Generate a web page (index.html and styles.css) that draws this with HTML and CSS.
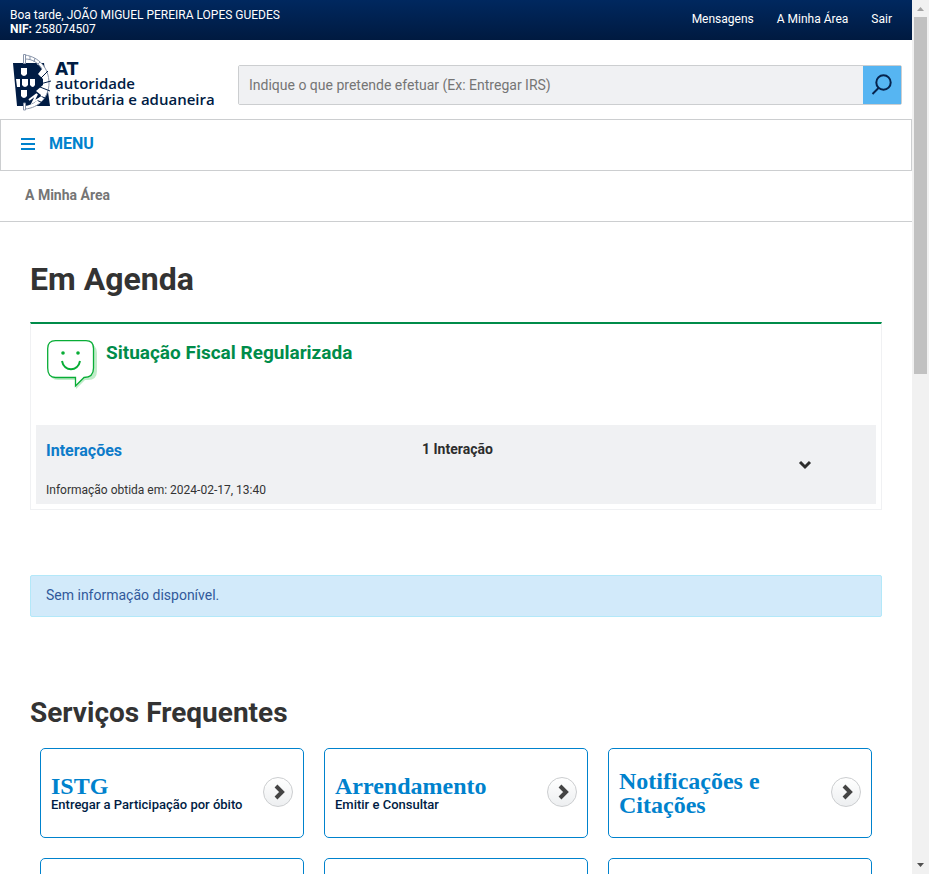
FILE: index.html
```html
<!DOCTYPE html>
<html lang="pt">
<head>
<meta charset="utf-8">
<title>A Minha Área</title>
<link rel="stylesheet" href="styles.css">
</head>
<body>
<div class="viewport">
  <div class="page">
    <header class="topbar">
      <p class="greeting">Boa tarde, JOÃO MIGUEL PEREIRA LOPES GUEDES<br><b>NIF:</b> 258074507</p>
      <nav class="toplinks">
        <a href="#">Mensagens</a>
        <a href="#">A Minha Área</a>
        <a href="#">Sair</a>
      </nav>
    </header>

    <div class="brandbar">
      <a class="logo" href="#">
        <svg class="emblem" width="38" height="58" viewBox="0 0 38 58" aria-hidden="true">
          <path d="M0 9H31L37 52H4Z" fill="#001c44"/>
          <path d="M12 1C26 3 36 14 36 29C36 43 26 54 12 55V52C20 51 26 46 28 41L23 37L30 31V25L25 20L29 15C25 9 20 5 12 5Z" fill="#fff"/>
          <path d="M12 1C26 3 36 14 36 29C36 43 26 54 12 55M12 5C20 5 25 9 29 15M17 2V6M22 4L21 8M27 8L24 11" fill="none" stroke="#8995aa"/>
          <path d="M28 24L35 17M27 30L38 27M27 33L37 37M17 43L30 49M20 39L32 44" stroke="#001c44"/>
          <path d="M16 46L24 40L20 48L29 43" fill="none" stroke="#fff" stroke-width="2"/>
          <path d="M10.500 .5h2v9h-2zM10.500 49h2v7h-2z" fill="#fff" stroke="#8995aa"/>
          <path d="M8 14h6v6q-3 4-6 0zM3 25h4v8h-3zM9 25h6v6q-3 4-6 0zM17 25h5v6q-2 4-5 0zM8 36h6v6q-3 4-6 0z" fill="#fff"/>
        </svg>
        <span class="logo-text"><span class="logo-at">AT</span><span class="logo-line">autoridade</span><span>tributária e aduaneira</span></span>
      </a>
      <form class="search">
        <input type="search" aria-label="Pesquisa" placeholder="Indique o que pretende efetuar (Ex: Entregar IRS)">
        <button type="button" aria-label="Pesquisar">
          <svg width="22" height="22" viewBox="0 0 22 22" fill="none" stroke="#06234d" stroke-width="2"><circle cx="12.500" cy="8.500" r="7.200"/><path d="M7.500 14L1.500 20"/></svg>
        </button>
      </form>
    </div>

    <nav class="menubar">
      <button type="button" class="menu">
        <svg width="14" height="12" viewBox="0 0 14 12" fill="#0082cd" aria-hidden="true"><path d="M0 0h14v2H0zM0 5h14v2H0zM0 10h14v2H0z"/></svg>
        MENU
      </button>
    </nav>
    <div class="breadcrumb">A Minha Área</div>

    <main class="content">
      <h1>Em Agenda</h1>
      <section class="panel">
        <div class="status">
          <svg width="50" height="50" viewBox="0 0 50 50" aria-hidden="true">
            <path d="M11 4H41Q50 4 50 13V31Q50 40 41 40H38L29 49V40H11Q3 40 3 31V13Q3 4 11 4Z" fill="#c0ecc9"/>
            <path d="M8.500 .7H39Q46.500 .7 46.500 8.500V28Q46.500 37.500 37 37.500L28.500 46V37.500H8.500Q.7 37.500 .7 28V8.500Q.7 .7 8.500 .7Z" fill="#fff" stroke="#08ad36" stroke-width="1.300"/>
            <g fill="#08ad36"><circle cx="16" cy="13" r="1.800"/><circle cx="31" cy="13" r="1.800"/></g>
            <path d="M15 21C17 32 31 32 33 21" fill="none" stroke="#08ad36" stroke-width="2"/>
          </svg>
          <h2>Situação Fiscal Regularizada</h2>
        </div>
        <div class="interactions">
          <div>
            <h3>Interações</h3>
            <p class="obtained">Informação obtida em: 2024-02-17, 13:40</p>
          </div>
          <p class="count">1 Interação</p>
          <button type="button" class="toggle" aria-label="Expandir">
            <svg width="14" height="10" viewBox="0 0 14 10" fill="none" stroke="#2d2d2d" stroke-width="3"><path d="M2 2L7 7L12 2"/></svg>
          </button>
        </div>
      </section>
      <p class="alert">Sem informação disponível.</p>

      <h2 class="section-title">Serviços Frequentes</h2>
      <div class="cards">
        <a class="card" href="#"><span class="card-text"><span class="card-title">ISTG</span><span class="card-sub">Entregar a Participação por óbito</span></span><span class="go"><svg width="12" height="16" viewBox="0 0 12 16" fill="none" stroke="#444" stroke-width="4"><path d="M2 2L8 8L2 14"/></svg></span></a>
        <a class="card" href="#"><span class="card-text"><span class="card-title">Arrendamento</span><span class="card-sub">Emitir e Consultar</span></span><span class="go"><svg width="12" height="16" viewBox="0 0 12 16" fill="none" stroke="#444" stroke-width="4"><path d="M2 2L8 8L2 14"/></svg></span></a>
        <a class="card" href="#"><span class="card-text"><span class="card-title">Notificações e Citações</span></span><span class="go"><svg width="12" height="16" viewBox="0 0 12 16" fill="none" stroke="#444" stroke-width="4"><path d="M2 2L8 8L2 14"/></svg></span></a>
        <div class="card"></div>
        <div class="card"></div>
        <div class="card"></div>
      </div>
    </main>
  </div>
  <div class="scrollbar" aria-hidden="true">
    <svg width="17" height="17" viewBox="0 0 17 17"><path d="M5 11L8.500 7L12 11Z" fill="#a3a3a3"/></svg>
    <div class="track"><div class="thumb"></div></div>
    <svg width="17" height="17" viewBox="0 0 17 17"><path d="M5 6L8.500 10L12 6Z" fill="#505050"/></svg>
  </div>
</div>
</body>
</html>
```

FILE: styles.css
```css
* { box-sizing: border-box; }
body, h1, h2, h3, p { margin: 0; }
body { font: 14px/20px Roboto, "Liberation Sans", sans-serif; color: #333; background: #fff; }
a { color: inherit; text-decoration: none; }
button { border: 0; background: none; padding: 0; font: inherit; }

.viewport { display: flex; height: 100vh; overflow: hidden; }
.page { flex: 1; min-width: 0; overflow: hidden; }

.topbar { display: flex; justify-content: space-between; height: 40px; padding: 8px 20px 0 10px; color: #fff; background: linear-gradient(#00285f, #001a40); font-size: 12px; line-height: 14px; }
.toplinks { display: flex; gap: 23px; padding-top: 4px; }

.brandbar { display: flex; align-items: center; gap: 22px; height: 79px; padding: 0 10px 0 13px; }
.logo { display: flex; gap: 4px; flex: none; color: #001c44; }
.emblem { flex: none; margin-top: 6px; }
.logo-text { display: flex; flex-direction: column; width: 161px; padding-top: 14px; font: 600 15px/18px "Open Sans", sans-serif; white-space: nowrap; }
.logo-at { font: 700 17px/14px "DejaVu Sans", sans-serif; }
.logo-line { line-height: 14px; }
.search { display: flex; flex: 1; height: 40px; margin-top: 11px; border: 1px solid #ccced0; border-radius: 2px; }
.search input { flex: 1; min-width: 0; border: 0; padding: 0 10px; background: #f0f1f3; font: inherit; color: #444; }
.search input::placeholder { color: #757575; }
.search button { display: flex; align-items: center; justify-content: center; width: 38px; background: #56b5f2; }

.menubar { height: 52px; padding: 14px 20px; border: 1px solid #ccced0; }
.menu { display: flex; align-items: center; gap: 14px; color: #0082cd; font-weight: 700; font-size: 16px; line-height: 20px; }
.breadcrumb { padding: 14px 25px 16px; border-bottom: 1px solid #ccced0; color: #757575; font-weight: 700; }

.content { padding: 37px 30px 0; }
h1 { font-size: 32px; line-height: 40px; font-weight: 700; }
.panel { margin-top: 23px; padding: 0 5px 5px; border: 1px solid #f0f1f3; border-top: 2px solid #008c4a; }
.status { display: flex; gap: 9px; height: 101px; padding: 16px 10px 0 11px; }
.status h2 { color: #008c4a; font-size: 19px; line-height: 25px; font-weight: 700; }
.interactions { display: grid; grid-template-columns: 376px 1fr 62px; padding: 15px 26px 4px 10px; background: #f0f1f3; }
.interactions h3 { color: #0d7bc9; font-size: 16px; line-height: 21px; font-weight: 700; }
.obtained { margin-top: 20px; font-size: 12px; line-height: 19px; }
.count { font-weight: 700; line-height: 18px; color: #2d2d2d; }
.toggle { align-self: start; justify-self: start; display: flex; margin: 20px 0 0 10px; }
.alert { margin-top: 65px; padding: 9px 15px 11px; border: 1px solid #b3e8f9; border-radius: 2px; color: #31599b; background: #d2eafa; }
.section-title { margin-top: 78px; font-size: 28px; line-height: 36px; font-weight: 700; }
.cards { display: grid; grid-template-columns: repeat(3, 1fr); gap: 20px; padding: 17px 10px 0; }
.card { display: flex; align-items: center; justify-content: space-between; height: 90px; padding: 0 10px; border: 1px solid #0082cd; border-radius: 5px; }
.card-text { display: flex; flex-direction: column; }
.card-title { color: #0082cd; font: 700 24px/24px "Roboto Slab", "Liberation Serif", serif; }
.card-sub { color: #001c44; font-size: 13px; line-height: 14px; font-weight: 500; }
.go { flex: none; display: flex; align-items: center; justify-content: center; width: 30px; height: 30px; margin-bottom: 2px; padding-left: 3px; border: 1px solid #ccced0; border-radius: 50%; background: linear-gradient(#fff, #edeff1); }

.scrollbar { flex: none; display: flex; flex-direction: column; width: 17px; background: #f1f1f1; }
.track { flex: 1; padding: 0 2px; }
.thumb { height: 357px; background: #c1c1c1; }
```
